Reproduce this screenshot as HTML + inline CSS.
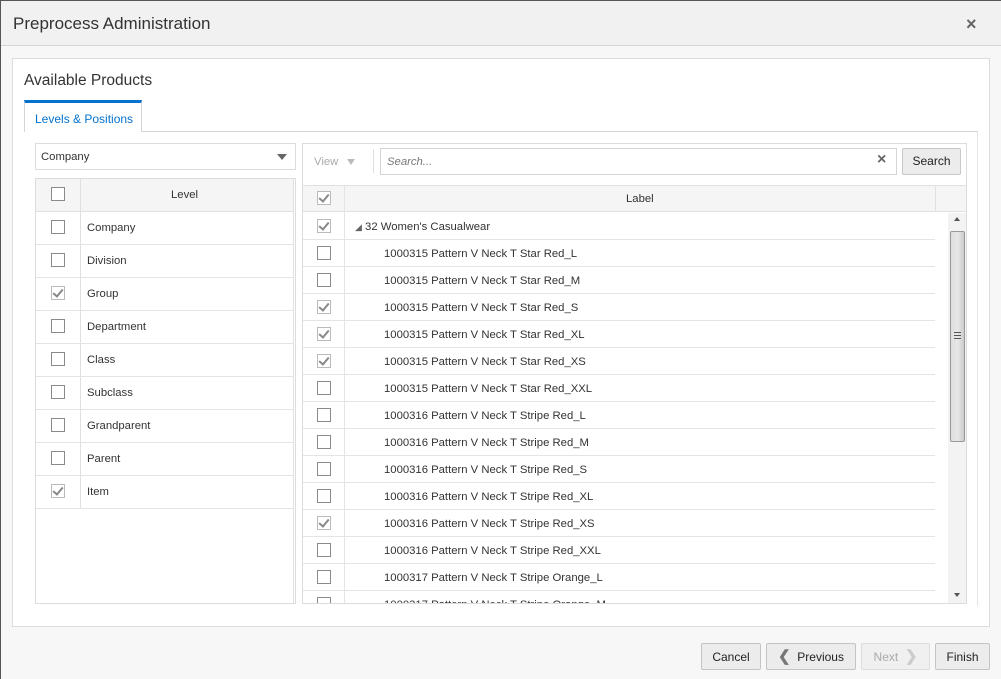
<!DOCTYPE html>
<html><head><meta charset="utf-8"><style>
*{box-sizing:border-box;margin:0;padding:0}
body{width:1001px;height:679px;position:relative;overflow:hidden;background:#f7f7f7;font-family:"Liberation Sans",sans-serif;font-size:11.3px;color:#333}
.a{position:absolute}
.cb{position:absolute;width:14px;height:14px;border:1px solid #8a8a8a;background:#fff}
.cb.c::after{content:"";position:absolute;left:3px;top:0px;width:4px;height:8px;border-right:2px solid #888;border-bottom:2px solid #888;transform:rotate(40deg)}
.cb.g{border-color:#bbb}
.btn{position:absolute;top:643px;height:27px;border:1px solid #c4c4c4;background:#ececec;border-radius:2px;text-align:center;line-height:25px;font-size:12px;color:#222}
.lr{position:absolute;left:36px;width:258px;height:33px;border-bottom:1px solid #e4e4e4}
.lr span{position:absolute;left:51px;top:10px}
.lr .cb{left:15px;top:8px}
.rr{position:absolute;left:303px;width:632px;height:27px;border-bottom:1px solid #e4e4e4}
.rr span{position:absolute;left:81px;top:8px}
.rr .cb{left:14px;top:6px}
</style></head><body>
<div class="a" style="left:0;top:0;width:1001px;height:679px;border-left:1px solid #555;border-top:1px solid #555"></div>
<div class="a" style="left:1px;top:1px;width:1000px;height:45px;background:#f1f1f1;border-bottom:1px solid #d5d5d5"></div>
<div class="a" style="left:13px;top:14px;font-size:17px;color:#333">Preprocess Administration</div>
<div class="a" style="left:966px;top:14px;font-size:18px;color:#666;font-weight:bold">×</div>
<div class="a" style="left:12px;top:58px;width:978px;height:569px;background:#fff;border:1px solid #dcdcdc"></div>
<div class="a" style="left:24px;top:72px;font-size:15.5px;color:#333">Available Products</div>
<div class="a" style="left:24px;top:100px;width:118px;height:32px;border:1px solid #d5d5d5;border-top:3px solid #0572ce;border-bottom:none;background:#fff;z-index:2"></div>
<div class="a" style="left:35px;top:112px;color:#0572ce;z-index:3;font-size:12px">Levels &amp; Positions</div>
<div class="a" style="left:24px;top:131px;width:954px;height:475px;border-top:1px solid #d5d5d5;border-right:1px solid #e4e4e4"></div>
<!-- left -->
<div class="a" style="left:35px;top:143px;width:261px;height:27px;border:1px solid #dcdcdc;background:#fff"></div>
<div class="a" style="left:41px;top:151px">Company</div>
<div class="a" style="left:277px;top:154px;width:0;height:0;border-left:5px solid transparent;border-right:5px solid transparent;border-top:6px solid #666"></div>
<div class="a" style="left:35px;top:178px;width:261px;height:426px;border:1px solid #dcdcdc;background:#fff"></div>
<div class="a" style="left:36px;top:179px;width:258px;height:33px;background:#f5f5f5;border-bottom:1px solid #e0e0e0"></div>
<div class="a" style="left:80px;top:179px;width:1px;height:330px;background:#e0e0e0"></div>
<div class="a" style="left:293px;top:179px;width:1px;height:424px;background:#e0e0e0"></div>
<div class="cb" style="left:51px;top:187px"></div>
<div class="a" style="left:171px;top:189px">Level</div>
<div class="lr" style="top:212px"><div class="cb"></div><span>Company</span></div>
<div class="lr" style="top:245px"><div class="cb"></div><span>Division</span></div>
<div class="lr" style="top:278px"><div class="cb c g"></div><span>Group</span></div>
<div class="lr" style="top:311px"><div class="cb"></div><span>Department</span></div>
<div class="lr" style="top:344px"><div class="cb"></div><span>Class</span></div>
<div class="lr" style="top:377px"><div class="cb"></div><span>Subclass</span></div>
<div class="lr" style="top:410px"><div class="cb"></div><span>Grandparent</span></div>
<div class="lr" style="top:443px"><div class="cb"></div><span>Parent</span></div>
<div class="lr" style="top:476px"><div class="cb c g"></div><span>Item</span></div>
<!-- right -->
<div class="a" style="left:302px;top:143px;width:665px;height:461px;border:1px solid #dcdcdc;background:#fff"></div>
<div class="a" style="left:314px;top:156px;color:#aaa">View</div>
<div class="a" style="left:347px;top:159px;width:0;height:0;border-left:4px solid transparent;border-right:4px solid transparent;border-top:6px solid #bbb"></div>
<div class="a" style="left:373px;top:149px;width:1px;height:24px;background:#e0e0e0"></div>
<div class="a" style="left:380px;top:148px;width:517px;height:27px;border:1px solid #d5d5d5;background:#fff"></div>
<div class="a" style="left:387px;top:156px;color:#777;font-style:italic">Search...</div>
<div class="a" style="left:877px;top:151px;font-size:16px;color:#666;font-weight:bold">×</div>
<div class="a" style="left:902px;top:148px;width:59px;height:27px;border:1px solid #c8c8c8;background:#ececec;border-radius:2px;text-align:center;line-height:25px;color:#222;font-size:12px">Search</div>
<div class="a" style="left:303px;top:185px;width:663px;height:27px;background:#f5f5f5;border-top:1px solid #e0e0e0;border-bottom:1px solid #e0e0e0"></div>
<div class="a" style="left:344px;top:186px;width:1px;height:417px;background:#e4e4e4"></div>
<div class="a" style="left:935px;top:186px;width:1px;height:26px;background:#e0e0e0"></div>
<div class="cb c g" style="left:317px;top:191px"></div>
<div class="a" style="left:626px;top:193px">Label</div>
<div class="rr" style="top:213px"><div class="cb c g"></div><span style="left:52px"><span style="position:static;font-size:9px;color:#666">◢</span> 32 Women's Casualwear</span></div>
<div class="rr" style="top:240px"><div class="cb"></div><span>1000315 Pattern V Neck T Star Red_L</span></div>
<div class="rr" style="top:267px"><div class="cb"></div><span>1000315 Pattern V Neck T Star Red_M</span></div>
<div class="rr" style="top:294px"><div class="cb c g"></div><span>1000315 Pattern V Neck T Star Red_S</span></div>
<div class="rr" style="top:321px"><div class="cb c g"></div><span>1000315 Pattern V Neck T Star Red_XL</span></div>
<div class="rr" style="top:348px"><div class="cb c g"></div><span>1000315 Pattern V Neck T Star Red_XS</span></div>
<div class="rr" style="top:375px"><div class="cb"></div><span>1000315 Pattern V Neck T Star Red_XXL</span></div>
<div class="rr" style="top:402px"><div class="cb"></div><span>1000316 Pattern V Neck T Stripe Red_L</span></div>
<div class="rr" style="top:429px"><div class="cb"></div><span>1000316 Pattern V Neck T Stripe Red_M</span></div>
<div class="rr" style="top:456px"><div class="cb"></div><span>1000316 Pattern V Neck T Stripe Red_S</span></div>
<div class="rr" style="top:483px"><div class="cb"></div><span>1000316 Pattern V Neck T Stripe Red_XL</span></div>
<div class="rr" style="top:510px"><div class="cb c g"></div><span>1000316 Pattern V Neck T Stripe Red_XS</span></div>
<div class="rr" style="top:537px"><div class="cb"></div><span>1000316 Pattern V Neck T Stripe Red_XXL</span></div>
<div class="rr" style="top:564px"><div class="cb"></div><span>1000317 Pattern V Neck T Stripe Orange_L</span></div>
<div class="a" style="left:303px;top:591px;width:632px;height:12px;overflow:hidden"><div class="cb" style="left:14px;top:6px"></div><span style="position:absolute;left:81px;top:8px">1000317 Pattern V Neck T Stripe Orange_M</span></div>
<div class="a" style="left:948px;top:213px;width:18px;height:390px;background:#f3f3f3"></div>
<div class="a" style="left:954px;top:217px;width:0;height:0;border-left:3px solid transparent;border-right:3px solid transparent;border-bottom:4px solid #555"></div>
<div class="a" style="left:954px;top:593px;width:0;height:0;border-left:3px solid transparent;border-right:3px solid transparent;border-top:4px solid #555"></div>
<div class="a" style="left:950px;top:231px;width:15px;height:211px;background:linear-gradient(90deg,#ddd,#e8e8e8,#ccc);border:1px solid #999;border-radius:2px"></div>
<div class="a" style="left:954px;top:332px;width:7px;height:7px;border-top:1px solid #555;border-bottom:1px solid #555"></div>
<div class="a" style="left:954px;top:335px;width:7px;height:1px;background:#555"></div>
<!-- footer -->
<div class="btn" style="left:701px;width:60px;line-height:27px">Cancel</div>
<div class="btn" style="left:766px;width:90px"><span style="color:#777;font-weight:bold;font-size:15px">❮</span>&nbsp; Previous</div>
<div class="btn" style="left:861px;width:69px;color:#aaa;background:#f0f0f0;border-color:#ddd">Next &nbsp;<span style="color:#ccc;font-weight:bold;font-size:15px">❯</span></div>
<div class="btn" style="left:935px;width:55px;line-height:27px">Finish</div>
</body></html>
